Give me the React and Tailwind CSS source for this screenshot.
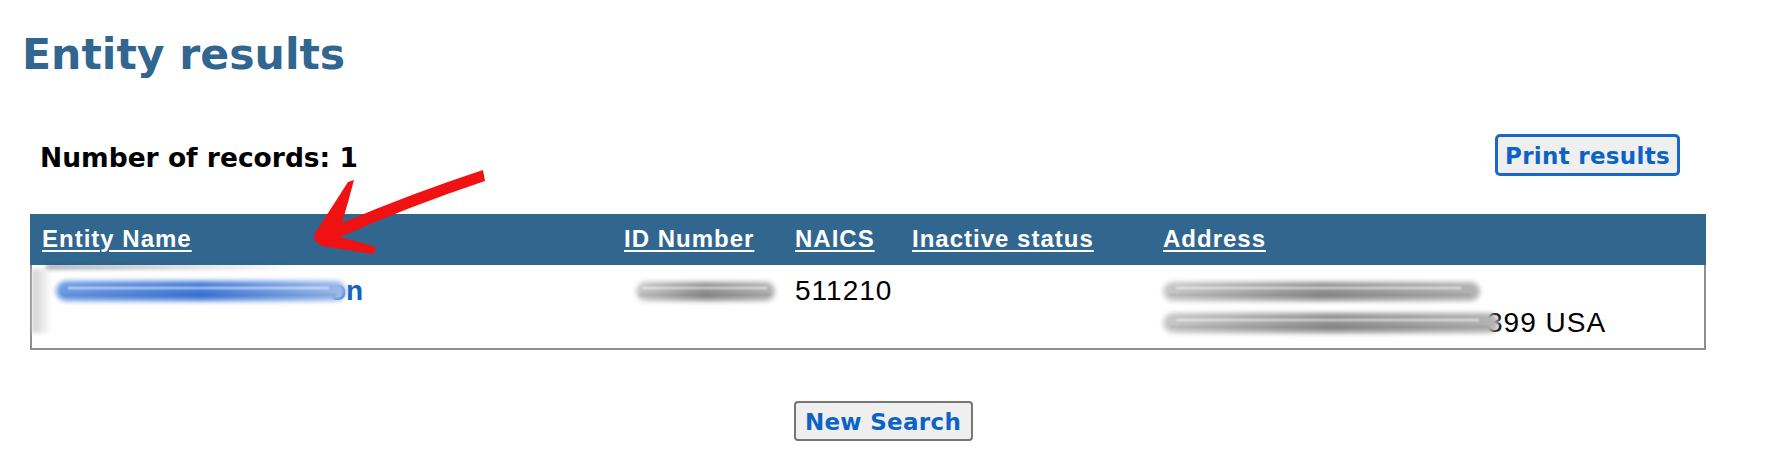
import React from "react";

// Blurred redaction strip used over private values in the result row
function Smear({ className = "", tone = "gray" }) {
  const fill =
    tone === "blue"
      ? "bg-linear-to-r from-[#6f9be4] via-[#3f78d7] to-[#9dbbec]"
      : "bg-linear-to-r from-[#c9c9c9] via-[#8e8e8e] to-[#b4b4b4]";
  return (
    <span className={`relative z-10 inline-block ${className}`}>
      <span className={`absolute inset-0 rounded-full ${fill} blur-[2.5px]`} />
      <span className="absolute left-[4%] right-[6%] top-[30%] h-[2px] bg-white/70 blur-[1px]" />
      <span className="absolute left-[2%] right-[3%] top-[65%] h-[2px] bg-black/10 blur-[1px]" />
    </span>
  );
}

const cols = "grid-cols-[584px_171px_117px_251px_1fr]";
const bodyCols = "grid-cols-[582px_171px_117px_251px_1fr]";

export default function App() {
  return (
    <div className="relative h-[476px] w-[1766px] overflow-hidden bg-white">
      <div className="pl-[22px] pt-[30px]">
        <h1 className="font-['DejaVu_Sans',sans-serif] text-[42.6px] font-bold leading-[48px] text-[#30668f]">
          Entity results
        </h1>
      </div>

      <div className="ml-[30px] mr-[60px]">
        <div className="mt-[56px] flex items-start justify-between">
          <p className="mt-[9px] pl-[10px] font-['DejaVu_Sans',sans-serif] text-[26.5px] font-bold leading-[30px] text-black">
            Number of records: 1
          </p>
          <button className="mr-[26px] h-[42px] w-[185px] rounded-[5px] border-[3px] border-[#1a67c9] bg-[#efefef] pt-[3px] font-['DejaVu_Sans',sans-serif] text-[23px] font-bold leading-[33px] tracking-[0.3px] text-[#0b63c6]">
            Print results
          </button>
        </div>

        <div className="mt-[38px] font-['Liberation_Sans',Arial,sans-serif]">
          {/* column headings */}
          <div
            className={`grid ${cols} bg-[#31668e] pb-[12px] pt-[11px] text-[24px] font-bold leading-[28px] tracking-[1px] text-white`}
          >
            {["Entity Name", "ID Number", "NAICS", "Inactive status", "Address"].map((h, i) => (
              <div key={h} className={i === 0 ? "pl-[12px] pr-[10px]" : "px-[10px]"}>
                <span className="underline decoration-2 underline-offset-[3px]">{h}</span>
              </div>
            ))}
          </div>

          {/* result row */}
          <div
            className={`relative grid ${bodyCols} border-x-2 border-b-2 border-[#8e8e8e] pb-[9px] pt-[10px] text-[28px] leading-[32px] tracking-[1px] text-black`}
          >
            <span className="absolute left-[14px] top-0 h-[4px] w-[260px] bg-linear-to-r from-[#3a4f66]/60 to-transparent blur-[2px]" />
            <span className="absolute left-0 top-[4px] h-[64px] w-[20px] bg-linear-to-r from-[#cfcfcf] to-transparent blur-[2px]" />

            <div className="px-[10px]">
              <div className="flex h-[32px] items-center">
                <Smear tone="blue" className="ml-[14px] h-[20px] w-[290px]" />
                <span className="-ml-[17px] font-bold tracking-normal text-[#1163c5]">on</span>
              </div>
            </div>
            <div className="px-[10px]">
              <div className="flex h-[32px] items-center">
                <Smear className="ml-[12px] h-[19px] w-[144px]" />
              </div>
            </div>
            <div className="px-[10px]">511210</div>
            <div className="px-[10px]" />
            <div className="px-[10px]">
              <div className="flex h-[32px] items-center">
                <Smear className="h-[19px] w-[317px]" />
              </div>
              <div className="flex h-[32px] items-center">
                <Smear className="h-[20px] w-[336px]" />
                <span className="-ml-[12px]">399 USA</span>
              </div>
            </div>
          </div>
        </div>
      </div>

      <div className="mt-[51px] flex justify-center">
        <button className="h-[40px] w-[179px] rounded-[4px] border-2 border-[#767676] bg-[#efefef] pt-[3px] font-['DejaVu_Sans',sans-serif] text-[23px] font-bold leading-[33px] tracking-[0.3px] text-[#0b63c6]">
          New Search
        </button>
      </div>

      {/* red annotation arrow pointing at the name column */}
      <svg
        className="pointer-events-none absolute left-0 top-0"
        width="1766"
        height="476"
        viewBox="0 0 1766 476"
      >
        <path
          d="M483 170 L485 181 Q410 206 340 237 L373 246 Q379 250 372 254 L322 246 L315 241 L314 235 Q330 210 348 182 L354 180 Q348 203 342 223 Q410 194 483 170 Z"
          fill="#f01212"
        />
      </svg>
    </div>
  );
}
